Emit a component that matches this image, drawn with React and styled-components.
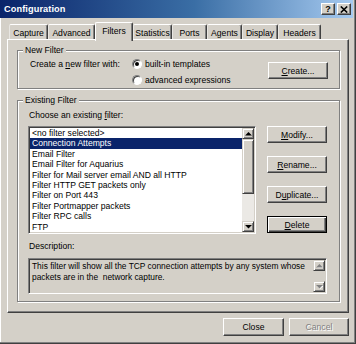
import React from 'react'
import styled, { createGlobalStyle } from 'styled-components'

const Global = createGlobalStyle`
  html, body { margin: 0; padding: 0; background: #d4d0c8; }
  * { box-sizing: border-box; }
  body {
    font-family: "Liberation Sans", Arial, sans-serif;
    font-size: 8.6px;
    color: #000;
  }
`

const Win = styled.div`
  width: 356px;
  height: 344px;
  background: #d4d0c8;
  display: flex;
  flex-direction: column;
  border-right: 1px solid #404040;
  border-bottom: 1px solid #404040;
  box-shadow: inset -1px -1px 0 #808080, inset 1px 0 0 #fff;
  padding: 0 2px 2px 0;
`

const TitleBar = styled.div`
  height: 18px;
  display: flex;
  align-items: center;
  justify-content: space-between;
  padding: 0 2px 0 4px;
  background: linear-gradient(90deg, #0a246a 0%, #3a6ea5 55%, #a6caf0 100%);
`

const TitleText = styled.div`
  color: #fff;
  font-weight: bold;
  font-size: 9.2px;
  letter-spacing: 0.1px;
`

const CapButtons = styled.div`
  display: flex;
  gap: 2px;
`

const CapBtn = styled.div`
  width: 14px;
  height: 12px;
  background: #d4d0c8;
  border: 1px solid;
  border-color: #fff #404040 #404040 #fff;
  box-shadow: inset -1px -1px 0 #808080;
  display: flex;
  align-items: center;
  justify-content: center;
  font-weight: bold;
  font-size: 9px;
  line-height: 10px;
`

const Body = styled.div`
  flex: 1;
  display: flex;
  flex-direction: column;
  padding: 4px 4px 0 7px;
`

const TabRow = styled.div`
  height: 17px;
  display: flex;
  align-items: flex-end;
  padding-left: 2px;
  position: relative;
  z-index: 1;
`

const Tab = styled.div`
  width: ${p => p.$w}px;
  height: ${p => (p.$active ? 19 : 15)}px;
  margin-bottom: ${p => (p.$active ? -2 : 0)}px;
  background: #d4d0c8;
  border-top: 1px solid #fff;
  border-left: 1px solid ${p => (p.$active ? '#fff' : '#e8e6e2')};
  border-right: 1px solid #404040;
  box-shadow: inset -1px 0 0 #808080;
  border-radius: 2px 2px 0 0;
  text-align: center;
  padding-top: 2px;
  line-height: 12px;
  white-space: nowrap;
`

const Panel = styled.div`
  height: 274px;
  border: 1px solid;
  border-color: #fff #404040 #404040 #fff;
  box-shadow: inset -1px -1px 0 #808080;
  padding: 10px 8px 10px 9px;
  display: flex;
  flex-direction: column;
`

const Group = styled.div`
  height: ${p => p.$h}px;
  margin-top: ${p => p.$mt || 0}px;
  border: 1px solid #808080;
  box-shadow: inset 1px 1px 0 #fff, 1px 1px 0 #fff;
`

const Legend = styled.div`
  width: max-content;
  height: 10px;
  line-height: 10px;
  margin: -6px 0 0 5px;
  padding: 0 2px;
  background: #d4d0c8;
`

const NewGrid = styled.div`
  margin-top: 1px;
  display: grid;
  grid-template-columns: 103px 1fr 60px;
  grid-template-rows: 16px 16px;
  padding: 0 11px 0 11px;
`

const Label = styled.div`
  line-height: ${p => p.$lh || 16}px;
  padding-left: 1px;
  margin-top: ${p => p.$mt || 0}px;
  white-space: nowrap;
`

const RadioItem = styled.div`
  grid-column: 2;
  display: flex;
  align-items: center;
  gap: 3px;
  white-space: nowrap;
`

const Radio = styled.span`
  width: 10px;
  height: 10px;
  border-radius: 50%;
  background: #fff;
  border: 1px solid;
  border-color: #808080 #fff #fff #808080;
  box-shadow: inset 1px 1px 0 #404040;
  display: flex;
  align-items: center;
  justify-content: center;
  &::after {
    content: '';
    width: 4px;
    height: 4px;
    border-radius: 50%;
    background: ${p => (p.$on ? '#000' : 'transparent')};
  }
`

const Button = styled.div`
  width: ${p => p.$w || 60}px;
  height: ${p => p.$h || 17}px;
  background: #d4d0c8;
  border: 1px solid;
  border-color: ${p => (p.$default ? '#000' : '#fff #404040 #404040 #fff')};
  box-shadow: ${p =>
    p.$default
      ? 'inset 1px 1px 0 #fff, inset -1px -1px 0 #404040, inset -2px -2px 0 #808080'
      : 'inset -1px -1px 0 #808080'};
  display: flex;
  align-items: center;
  justify-content: center;
  color: ${p => (p.$disabled ? '#808080' : '#000')};
  text-shadow: ${p => (p.$disabled ? '1px 1px 0 #fff' : 'none')};
  white-space: nowrap;
`

const CreateButton = styled(Button)`
  grid-column: 3;
  grid-row: 1 / span 2;
  margin-top: 6px;
`

const ExistingBody = styled.div`
  padding: 0 10px;
`

const ListRow = styled.div`
  margin-top: 6px;
  display: flex;
  gap: 11px;
`

const Sunken = styled.div`
  width: ${p => p.$w}px;
  height: ${p => p.$h}px;
  margin-top: ${p => p.$mt || 0}px;
  background: ${p => p.$bg || '#fff'};
  border: 1px solid;
  border-color: #808080 #fff #fff #808080;
  box-shadow: inset 1px 1px 0 #404040, inset -1px -1px 0 #d4d0c8;
  padding: 1px;
  display: flex;
`

const Items = styled.div`
  flex: 1;
  overflow: hidden;
`

const Item = styled.div`
  height: 10.4px;
  line-height: 10.4px;
  padding-left: 2px;
  white-space: nowrap;
  background: ${p => (p.$sel ? '#0a246a' : 'transparent')};
  color: ${p => (p.$sel ? '#fff' : '#000')};
`

const ScrollBar = styled.div`
  width: 12px;
  display: flex;
  flex-direction: column;
`

const ScrollBtn = styled.div`
  height: 11px;
  background: #d4d0c8;
  border: 1px solid;
  border-color: #d4d0c8 #404040 #404040 #d4d0c8;
  box-shadow: inset 1px 1px 0 #fff, inset -1px -1px 0 #808080;
  display: flex;
  align-items: center;
  justify-content: center;
`

const Thumb = styled(ScrollBtn)`
  height: ${p => p.$h}px;
`

const Track = styled.div`
  flex: 1;
  background: ${p => (p.$plain ? '#d4d0c8' : '#ebe9e5')};
`

const SideButtons = styled.div`
  display: flex;
  flex-direction: column;
  gap: 13px;
`

const DescText = styled.div`
  flex: 1;
  padding: 1px 2px 0 2px;
  font-size: 8.4px;
  line-height: 11px;
  white-space: nowrap;
  overflow: hidden;
`

const Footer = styled.div`
  margin-top: 5px;
  display: flex;
  justify-content: flex-end;
  gap: 5px;
`

function Arrow({ down, disabled }) {
  const pts = down ? '0,0 6,0 3,3' : '0,3 6,3 3,0'
  return (
    <svg width="7" height="4" viewBox="0 0 6 3.5">
      {disabled && <polygon points={pts} fill="#fff" transform="translate(0.6,0.6)" />}
      <polygon points={pts} fill={disabled ? '#808080' : '#000'} />
    </svg>
  )
}

const tabs = [
  ['Capture', 39],
  ['Advanced', 47],
  ['Filters', 38],
  ['Statistics', 39],
  ['Ports', 35],
  ['Agents', 35],
  ['Display', 36],
  ['Headers', 43]
]

const filters = [
  '<no filter selected>',
  'Connection Attempts',
  'Email Filter',
  'Email Filter for Aquarius',
  'Filter for Mail server email AND all HTTP',
  'Filter HTTP GET packets only',
  'Filter on Port 443',
  'Filter Portmapper packets',
  'Filter RPC calls',
  'FTP'
]

export default function App() {
  return (
    <>
      <Global />
      <Win>
        <TitleBar>
          <TitleText>Configuration</TitleText>
          <CapButtons>
            <CapBtn>?</CapBtn>
            <CapBtn>
              <svg width="8" height="7" viewBox="0 0 8 7">
                <path d="M0.8 0.5 L7.2 6.5 M7.2 0.5 L0.8 6.5" stroke="#000" strokeWidth="1.6" />
              </svg>
            </CapBtn>
          </CapButtons>
        </TitleBar>
        <Body>
          <TabRow>
            {tabs.map(([t, w]) => (
              <Tab key={t} $w={w} $active={t === 'Filters'}>{t}</Tab>
            ))}
          </TabRow>
          <Panel>
            <Group $h={39}>
              <Legend>New Filter</Legend>
              <NewGrid>
                <Label>Create a <u>n</u>ew filter with:</Label>
                <RadioItem><Radio $on />built-in templates</RadioItem>
                <CreateButton><u>C</u>reate...</CreateButton>
                <RadioItem><Radio />advanced expressions</RadioItem>
              </NewGrid>
            </Group>
            <Group $h={202} $mt={11}>
              <Legend>Existing Filter</Legend>
              <ExistingBody>
                <Label $lh={10} $mt={5}>Choose an existing <u>f</u>ilter:</Label>
                <ListRow>
                  <Sunken $w={228} $h={108}>
                    <Items>
                      {filters.map((f, i) => (
                        <Item key={f} $sel={i === 1}>{f}</Item>
                      ))}
                    </Items>
                    <ScrollBar>
                      <ScrollBtn><Arrow /></ScrollBtn>
                      <Thumb $h={55} />
                      <Track />
                      <ScrollBtn><Arrow down /></ScrollBtn>
                    </ScrollBar>
                  </Sunken>
                  <SideButtons>
                    <Button><u>M</u>odify...</Button>
                    <Button><u>R</u>ename...</Button>
                    <Button>D<u>u</u>plicate...</Button>
                    <Button $default><u>D</u>elete</Button>
                  </SideButtons>
                </ListRow>
                <Label $lh={10} $mt={7}>Description:</Label>
                <Sunken $w={299} $h={36} $mt={7} $bg="#d4d0c8">
                  <DescText>
                    This filter will show all the TCP connection attempts by any system whose
                    <br />
                    packets are in the&nbsp; network capture.
                  </DescText>
                  <ScrollBar>
                    <ScrollBtn><Arrow disabled /></ScrollBtn>
                    <Track $plain />
                    <ScrollBtn><Arrow down disabled /></ScrollBtn>
                  </ScrollBar>
                </Sunken>
              </ExistingBody>
            </Group>
          </Panel>
          <Footer>
            <Button $w={61} $h={18}>Close</Button>
            <Button $w={60} $h={18} $disabled>Cancel</Button>
          </Footer>
        </Body>
      </Win>
    </>
  )
}
